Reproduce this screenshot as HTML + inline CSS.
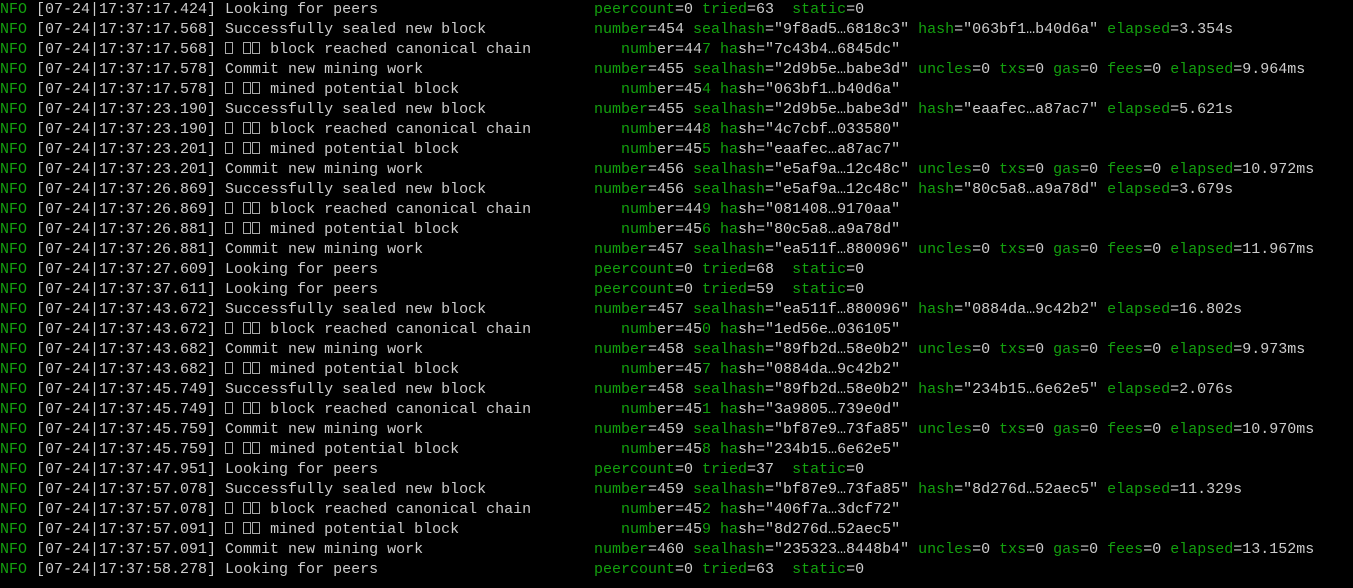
<!DOCTYPE html>
<html><head><meta charset="utf-8">
<style>
html,body{margin:0;padding:0;background:#000;width:1353px;height:588px;overflow:hidden}
body{font-family:"Liberation Mono","DejaVu Sans Mono",monospace;font-size:15px;color:#cccccc}
.l{position:relative;height:20px;line-height:20px;white-space:pre}
.wrap{position:absolute;top:0px;left:0}
.r{position:absolute;left:594px;top:0}
.i{position:absolute;left:621px;top:0}
.g{color:#13a10e}
.b{display:inline-block;box-sizing:border-box;width:8px;height:12px;border:1px solid #aaa;margin-right:1px;vertical-align:-1px}
</style></head><body><div class="wrap">
<div class="l"><span class="g">NFO</span> [07-24|17:37:17.424] Looking for peers<span class="r"><span class="g">peercount</span>=0 <span class="g">tried</span>=63  <span class="g">static</span>=0</span></div>
<div class="l"><span class="g">NFO</span> [07-24|17:37:17.568] Successfully sealed new block<span class="r"><span class="g">number</span>=454 <span class="g">sealhash</span>="9f8ad5…6818c3" <span class="g">hash</span>="063bf1…b40d6a" <span class="g">elapsed</span>=3.354s</span></div>
<div class="l"><span class="g">NFO</span> [07-24|17:37:17.568] <span class="b"></span> <span class="b"></span><span class="b"></span> block reached canonical chain<span class="i"><span class="g">numb</span>er=44<span class="g">7 ha</span>sh="7c43b4…6845dc"</span></div>
<div class="l"><span class="g">NFO</span> [07-24|17:37:17.578] Commit new mining work<span class="r"><span class="g">number</span>=455 <span class="g">sealhash</span>="2d9b5e…babe3d" <span class="g">uncles</span>=0 <span class="g">txs</span>=0 <span class="g">gas</span>=0 <span class="g">fees</span>=0 <span class="g">elapsed</span>=9.964ms</span></div>
<div class="l"><span class="g">NFO</span> [07-24|17:37:17.578] <span class="b"></span> <span class="b"></span><span class="b"></span> mined potential block<span class="i"><span class="g">numb</span>er=45<span class="g">4 ha</span>sh="063bf1…b40d6a"</span></div>
<div class="l"><span class="g">NFO</span> [07-24|17:37:23.190] Successfully sealed new block<span class="r"><span class="g">number</span>=455 <span class="g">sealhash</span>="2d9b5e…babe3d" <span class="g">hash</span>="eaafec…a87ac7" <span class="g">elapsed</span>=5.621s</span></div>
<div class="l"><span class="g">NFO</span> [07-24|17:37:23.190] <span class="b"></span> <span class="b"></span><span class="b"></span> block reached canonical chain<span class="i"><span class="g">numb</span>er=44<span class="g">8 ha</span>sh="4c7cbf…033580"</span></div>
<div class="l"><span class="g">NFO</span> [07-24|17:37:23.201] <span class="b"></span> <span class="b"></span><span class="b"></span> mined potential block<span class="i"><span class="g">numb</span>er=45<span class="g">5 ha</span>sh="eaafec…a87ac7"</span></div>
<div class="l"><span class="g">NFO</span> [07-24|17:37:23.201] Commit new mining work<span class="r"><span class="g">number</span>=456 <span class="g">sealhash</span>="e5af9a…12c48c" <span class="g">uncles</span>=0 <span class="g">txs</span>=0 <span class="g">gas</span>=0 <span class="g">fees</span>=0 <span class="g">elapsed</span>=10.972ms</span></div>
<div class="l"><span class="g">NFO</span> [07-24|17:37:26.869] Successfully sealed new block<span class="r"><span class="g">number</span>=456 <span class="g">sealhash</span>="e5af9a…12c48c" <span class="g">hash</span>="80c5a8…a9a78d" <span class="g">elapsed</span>=3.679s</span></div>
<div class="l"><span class="g">NFO</span> [07-24|17:37:26.869] <span class="b"></span> <span class="b"></span><span class="b"></span> block reached canonical chain<span class="i"><span class="g">numb</span>er=44<span class="g">9 ha</span>sh="081408…9170aa"</span></div>
<div class="l"><span class="g">NFO</span> [07-24|17:37:26.881] <span class="b"></span> <span class="b"></span><span class="b"></span> mined potential block<span class="i"><span class="g">numb</span>er=45<span class="g">6 ha</span>sh="80c5a8…a9a78d"</span></div>
<div class="l"><span class="g">NFO</span> [07-24|17:37:26.881] Commit new mining work<span class="r"><span class="g">number</span>=457 <span class="g">sealhash</span>="ea511f…880096" <span class="g">uncles</span>=0 <span class="g">txs</span>=0 <span class="g">gas</span>=0 <span class="g">fees</span>=0 <span class="g">elapsed</span>=11.967ms</span></div>
<div class="l"><span class="g">NFO</span> [07-24|17:37:27.609] Looking for peers<span class="r"><span class="g">peercount</span>=0 <span class="g">tried</span>=68  <span class="g">static</span>=0</span></div>
<div class="l"><span class="g">NFO</span> [07-24|17:37:37.611] Looking for peers<span class="r"><span class="g">peercount</span>=0 <span class="g">tried</span>=59  <span class="g">static</span>=0</span></div>
<div class="l"><span class="g">NFO</span> [07-24|17:37:43.672] Successfully sealed new block<span class="r"><span class="g">number</span>=457 <span class="g">sealhash</span>="ea511f…880096" <span class="g">hash</span>="0884da…9c42b2" <span class="g">elapsed</span>=16.802s</span></div>
<div class="l"><span class="g">NFO</span> [07-24|17:37:43.672] <span class="b"></span> <span class="b"></span><span class="b"></span> block reached canonical chain<span class="i"><span class="g">numb</span>er=45<span class="g">0 ha</span>sh="1ed56e…036105"</span></div>
<div class="l"><span class="g">NFO</span> [07-24|17:37:43.682] Commit new mining work<span class="r"><span class="g">number</span>=458 <span class="g">sealhash</span>="89fb2d…58e0b2" <span class="g">uncles</span>=0 <span class="g">txs</span>=0 <span class="g">gas</span>=0 <span class="g">fees</span>=0 <span class="g">elapsed</span>=9.973ms</span></div>
<div class="l"><span class="g">NFO</span> [07-24|17:37:43.682] <span class="b"></span> <span class="b"></span><span class="b"></span> mined potential block<span class="i"><span class="g">numb</span>er=45<span class="g">7 ha</span>sh="0884da…9c42b2"</span></div>
<div class="l"><span class="g">NFO</span> [07-24|17:37:45.749] Successfully sealed new block<span class="r"><span class="g">number</span>=458 <span class="g">sealhash</span>="89fb2d…58e0b2" <span class="g">hash</span>="234b15…6e62e5" <span class="g">elapsed</span>=2.076s</span></div>
<div class="l"><span class="g">NFO</span> [07-24|17:37:45.749] <span class="b"></span> <span class="b"></span><span class="b"></span> block reached canonical chain<span class="i"><span class="g">numb</span>er=45<span class="g">1 ha</span>sh="3a9805…739e0d"</span></div>
<div class="l"><span class="g">NFO</span> [07-24|17:37:45.759] Commit new mining work<span class="r"><span class="g">number</span>=459 <span class="g">sealhash</span>="bf87e9…73fa85" <span class="g">uncles</span>=0 <span class="g">txs</span>=0 <span class="g">gas</span>=0 <span class="g">fees</span>=0 <span class="g">elapsed</span>=10.970ms</span></div>
<div class="l"><span class="g">NFO</span> [07-24|17:37:45.759] <span class="b"></span> <span class="b"></span><span class="b"></span> mined potential block<span class="i"><span class="g">numb</span>er=45<span class="g">8 ha</span>sh="234b15…6e62e5"</span></div>
<div class="l"><span class="g">NFO</span> [07-24|17:37:47.951] Looking for peers<span class="r"><span class="g">peercount</span>=0 <span class="g">tried</span>=37  <span class="g">static</span>=0</span></div>
<div class="l"><span class="g">NFO</span> [07-24|17:37:57.078] Successfully sealed new block<span class="r"><span class="g">number</span>=459 <span class="g">sealhash</span>="bf87e9…73fa85" <span class="g">hash</span>="8d276d…52aec5" <span class="g">elapsed</span>=11.329s</span></div>
<div class="l"><span class="g">NFO</span> [07-24|17:37:57.078] <span class="b"></span> <span class="b"></span><span class="b"></span> block reached canonical chain<span class="i"><span class="g">numb</span>er=45<span class="g">2 ha</span>sh="406f7a…3dcf72"</span></div>
<div class="l"><span class="g">NFO</span> [07-24|17:37:57.091] <span class="b"></span> <span class="b"></span><span class="b"></span> mined potential block<span class="i"><span class="g">numb</span>er=45<span class="g">9 ha</span>sh="8d276d…52aec5"</span></div>
<div class="l"><span class="g">NFO</span> [07-24|17:37:57.091] Commit new mining work<span class="r"><span class="g">number</span>=460 <span class="g">sealhash</span>="235323…8448b4" <span class="g">uncles</span>=0 <span class="g">txs</span>=0 <span class="g">gas</span>=0 <span class="g">fees</span>=0 <span class="g">elapsed</span>=13.152ms</span></div>
<div class="l"><span class="g">NFO</span> [07-24|17:37:58.278] Looking for peers<span class="r"><span class="g">peercount</span>=0 <span class="g">tried</span>=63  <span class="g">static</span>=0</span></div>
</div></body></html>
